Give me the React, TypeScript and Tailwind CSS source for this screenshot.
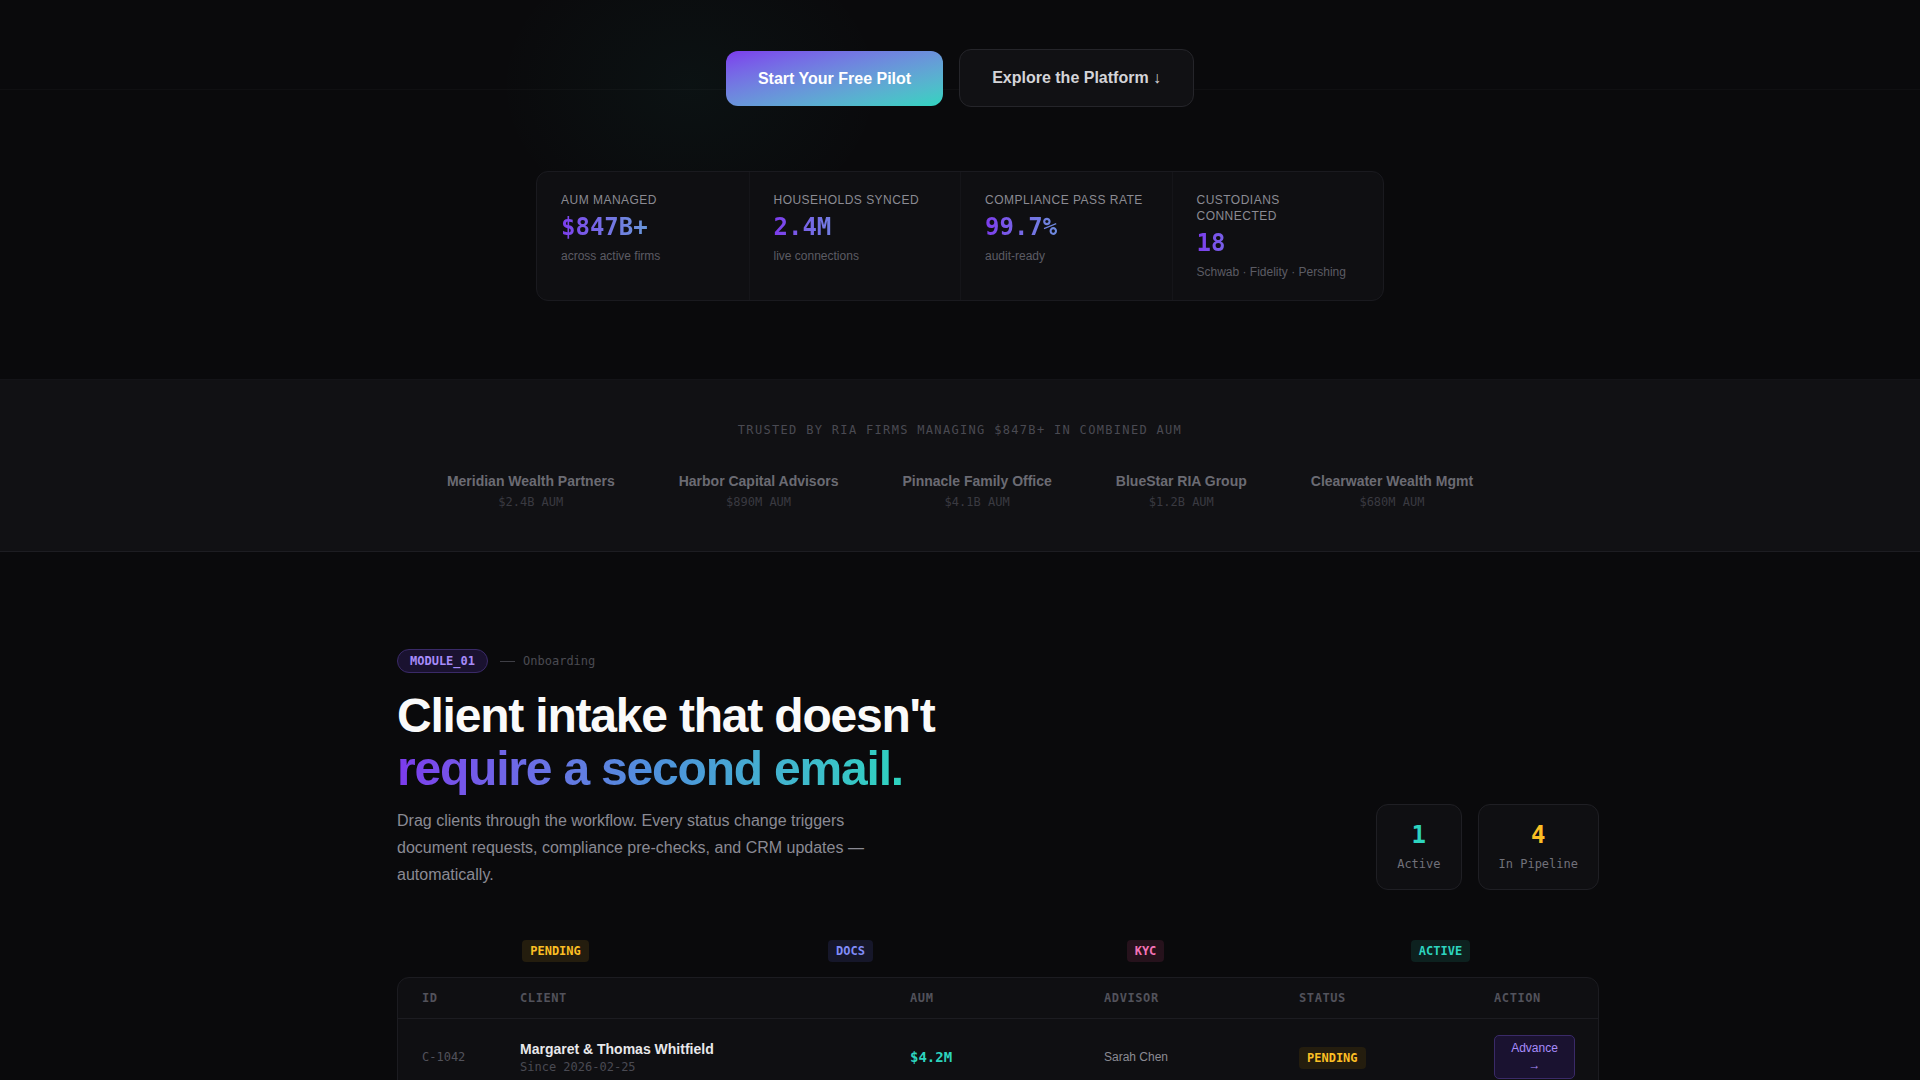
import React from "react";

const stats = [
  { label: "AUM Managed", value: "$847B+", sub: "across active firms" },
  { label: "Households Synced", value: "2.4M", sub: "live connections" },
  { label: "Compliance Pass Rate", value: "99.7%", sub: "audit-ready" },
  { label: "Custodians Connected", value: "18", sub: "Schwab · Fidelity · Pershing" },
];

const firms = [
  { name: "Meridian Wealth Partners", aum: "$2.4B AUM" },
  { name: "Harbor Capital Advisors", aum: "$890M AUM" },
  { name: "Pinnacle Family Office", aum: "$4.1B AUM" },
  { name: "BlueStar RIA Group", aum: "$1.2B AUM" },
  { name: "Clearwater Wealth Mgmt", aum: "$680M AUM" },
];

const rows = [
  { id: "C-1042", name: "Margaret & Thomas Whitfield", since: "Since 2026-02-25", aum: "$4.2M", advisor: "Sarah Chen", status: "PENDING" },
  { id: "C-1043", name: "Daniel Okafor", since: "Since 2026-02-24", aum: "$1.8M", advisor: "James Liu", status: "DOCS" },
  { id: "C-1044", name: "The Reyes Family Trust", since: "Since 2026-02-21", aum: "$7.6M", advisor: "Sarah Chen", status: "KYC" },
];

function StatusTag({ s, tall }: { s: string; tall?: boolean }) {
  const pad = tall ? "py-1" : "py-[3px]";
  if (s === "PENDING")
    return <span className={`rounded-[4px] bg-[#241d0e] px-2 ${pad} font-['DejaVu_Sans_Mono',monospace] text-xs leading-4 font-bold text-[#fbbf24]`}>PENDING</span>;
  if (s === "DOCS")
    return <span className={`rounded-[4px] bg-[#16172a] px-2 ${pad} font-['DejaVu_Sans_Mono',monospace] text-xs leading-4 font-bold text-[#818cf8]`}>DOCS</span>;
  if (s === "KYC")
    return <span className={`rounded-[4px] bg-[#26121c] px-2 ${pad} font-['DejaVu_Sans_Mono',monospace] text-xs leading-4 font-bold text-[#f472b6]`}>KYC</span>;
  return <span className={`rounded-[4px] bg-[#0d211f] px-2 ${pad} font-['DejaVu_Sans_Mono',monospace] text-xs leading-4 font-bold text-[#2dd4bf]`}>ACTIVE</span>;
}

export default function App() {
  return (
    <div className="min-h-screen bg-[#0a0a0c] pb-24 font-['Liberation_Sans',Arial,sans-serif] text-white">
      {/* Hero tail */}
      <section className="relative overflow-hidden pt-[49px] pb-[78px]">
        <div className="pointer-events-none absolute top-[-80px] left-[480px] h-[330px] w-[420px] bg-[radial-gradient(ellipse_at_center,rgba(45,212,191,0.04),transparent_65%)]" />
        <div className="pointer-events-none absolute inset-x-0 top-[89px] h-px bg-[#ffffff07]" />
        <div className="relative flex items-center justify-center gap-4">
          <button className="rounded-xl bg-linear-to-br from-[#7c3aed] to-[#2dd4bf] px-8 py-[18px] text-base leading-[19px] font-bold text-white">
            Start Your Free Pilot
          </button>
          <button className="rounded-xl border border-[#25252a] bg-[#111114] px-8 py-[19px] text-base leading-[18px] font-bold text-[#d4d4d8]">
            Explore the Platform ↓
          </button>
        </div>

        <div className="relative mx-auto mt-16 grid w-[848px] grid-cols-4 rounded-xl border border-[#1a1a1f] bg-[#0f0f12]">
          {stats.map((s, i) => (
            <div key={s.label} className={i > 0 ? "border-l border-[#151519] px-6 py-5" : "px-6 py-5"}>
              <div className="text-xs leading-4 tracking-[0.04em] text-[#8b8b93] uppercase">{s.label}</div>
              <div className="mt-[5px] block bg-linear-to-r from-[#7c3aed] to-[#2dd4bf] bg-clip-text font-['DejaVu_Sans_Mono',monospace] text-2xl leading-7 font-bold text-transparent">
                {s.value}
              </div>
              <div className="mt-[7px] text-xs leading-4 text-[#5c5c64]">{s.sub}</div>
            </div>
          ))}
        </div>
      </section>

      {/* Trusted band */}
      <section className="border-y border-t-[#141418] border-b-[#1d1d22] bg-[#111114] pt-[42px] pb-[41px]">
        <p className="text-center font-['DejaVu_Sans_Mono',monospace] text-xs leading-4 tracking-[0.11em] text-[#4a4a52] uppercase">
          Trusted by RIA firms managing $847B+ in combined AUM
        </p>
        <div className="mt-[33px] flex justify-center gap-16">
          {firms.map((f) => (
            <div key={f.name} className="text-center">
              <div className="text-sm leading-5 font-bold text-[#6b6b73]">{f.name}</div>
              <div className="mt-[3px] font-['DejaVu_Sans_Mono',monospace] text-xs leading-4 text-[#3a3a41]">{f.aum}</div>
            </div>
          ))}
        </div>
      </section>

      {/* Module */}
      <section className="pt-[97px]">
        <div className="mx-auto w-[1280px] pr-px pl-[77px]">
          <div className="flex items-center gap-3">
            <span className="rounded-full border border-[#3a2a68] bg-[#1a1230] px-3 py-[3px] font-['DejaVu_Sans_Mono',monospace] text-xs leading-4 font-bold text-[#a78bfa]">
              MODULE_01
            </span>
            <span className="flex items-center gap-2 font-['DejaVu_Sans_Mono',monospace] text-xs leading-4 text-[#4a4a52]">
              <span className="h-px w-[15px] bg-[#3f3f46]" />
              Onboarding
            </span>
          </div>

          <h2 className="mt-4 text-[48px] leading-[53px] font-bold tracking-[-0.025em] text-[#fafafa]">
            Client intake that doesn't
            <br />
            <span className="bg-linear-to-r from-[#7c3aed] via-[#4f8fdc] to-[#2dd4bf] bg-clip-text text-transparent">
              require a second email.
            </span>
          </h2>

          <div className="mt-3 flex items-start justify-between">
            <p className="max-w-[500px] text-base leading-[27px] text-[#8a8a94]">
              Drag clients through the workflow. Every status change triggers document requests, compliance pre-checks, and CRM updates — automatically.
            </p>
            <div className="mt-[-3px] flex gap-4">
              <div className="rounded-xl border border-[#1f1f24] bg-[#0f0f12] px-5 pt-4 pb-[17px] text-center">
                <div className="font-['DejaVu_Sans_Mono',monospace] text-2xl leading-7 font-bold text-[#2dd4bf]">1</div>
                <div className="mt-[7px] font-['DejaVu_Sans_Mono',monospace] text-xs leading-4 text-[#71717a]">Active</div>
              </div>
              <div className="rounded-xl border border-[#1f1f24] bg-[#0f0f12] px-5 pt-4 pb-[17px] text-center">
                <div className="font-['DejaVu_Sans_Mono',monospace] text-2xl leading-7 font-bold text-[#fbbf24]">4</div>
                <div className="mt-[7px] font-['DejaVu_Sans_Mono',monospace] text-xs leading-4 text-[#71717a]">In Pipeline</div>
              </div>
            </div>
          </div>

          <div className="mt-[50px] grid grid-cols-4 justify-items-center px-[11px]">
            <StatusTag s="PENDING" />
            <StatusTag s="DOCS" />
            <StatusTag s="KYC" />
            <StatusTag s="ACTIVE" />
          </div>

          <div className="mt-[15px] overflow-hidden rounded-xl border border-[#1c1c21] bg-[#0f0f12]">
            <div className="grid grid-cols-[98px_390px_194px_195px_195px_1fr] border-b border-[#1c1c21] px-6 py-3 font-['DejaVu_Sans_Mono',monospace] text-xs leading-4 font-bold tracking-[0.05em] text-[#52525b]">
              <div>ID</div>
              <div>CLIENT</div>
              <div>AUM</div>
              <div>ADVISOR</div>
              <div>STATUS</div>
              <div>ACTION</div>
            </div>
            {rows.map((r) => (
              <div key={r.id} className="grid grid-cols-[98px_390px_194px_195px_195px_1fr] items-center border-b border-[#17171b] px-6 py-4">
                <div className="font-['DejaVu_Sans_Mono',monospace] text-xs text-[#52525b]">{r.id}</div>
                <div>
                  <div className="text-sm leading-5 font-bold text-[#e8e8eb]">{r.name}</div>
                  <div className="font-['DejaVu_Sans_Mono',monospace] text-xs leading-4 text-[#4a4a52]">{r.since}</div>
                </div>
                <div className="font-['DejaVu_Sans_Mono',monospace] text-sm font-bold text-[#2dd4bf]">{r.aum}</div>
                <div className="text-xs text-[#8b8b93]">{r.advisor}</div>
                <div>
                  <StatusTag s={r.status} tall />
                </div>
                <div>
                  <button className="w-[81px] rounded-[5px] border border-[#3a2a68] bg-[#1a1230] px-3 py-1 text-xs leading-[17px] text-[#a78bfa]">
                    Advance →
                  </button>
                </div>
              </div>
            ))}
          </div>
        </div>
      </section>
    </div>
  );
}
